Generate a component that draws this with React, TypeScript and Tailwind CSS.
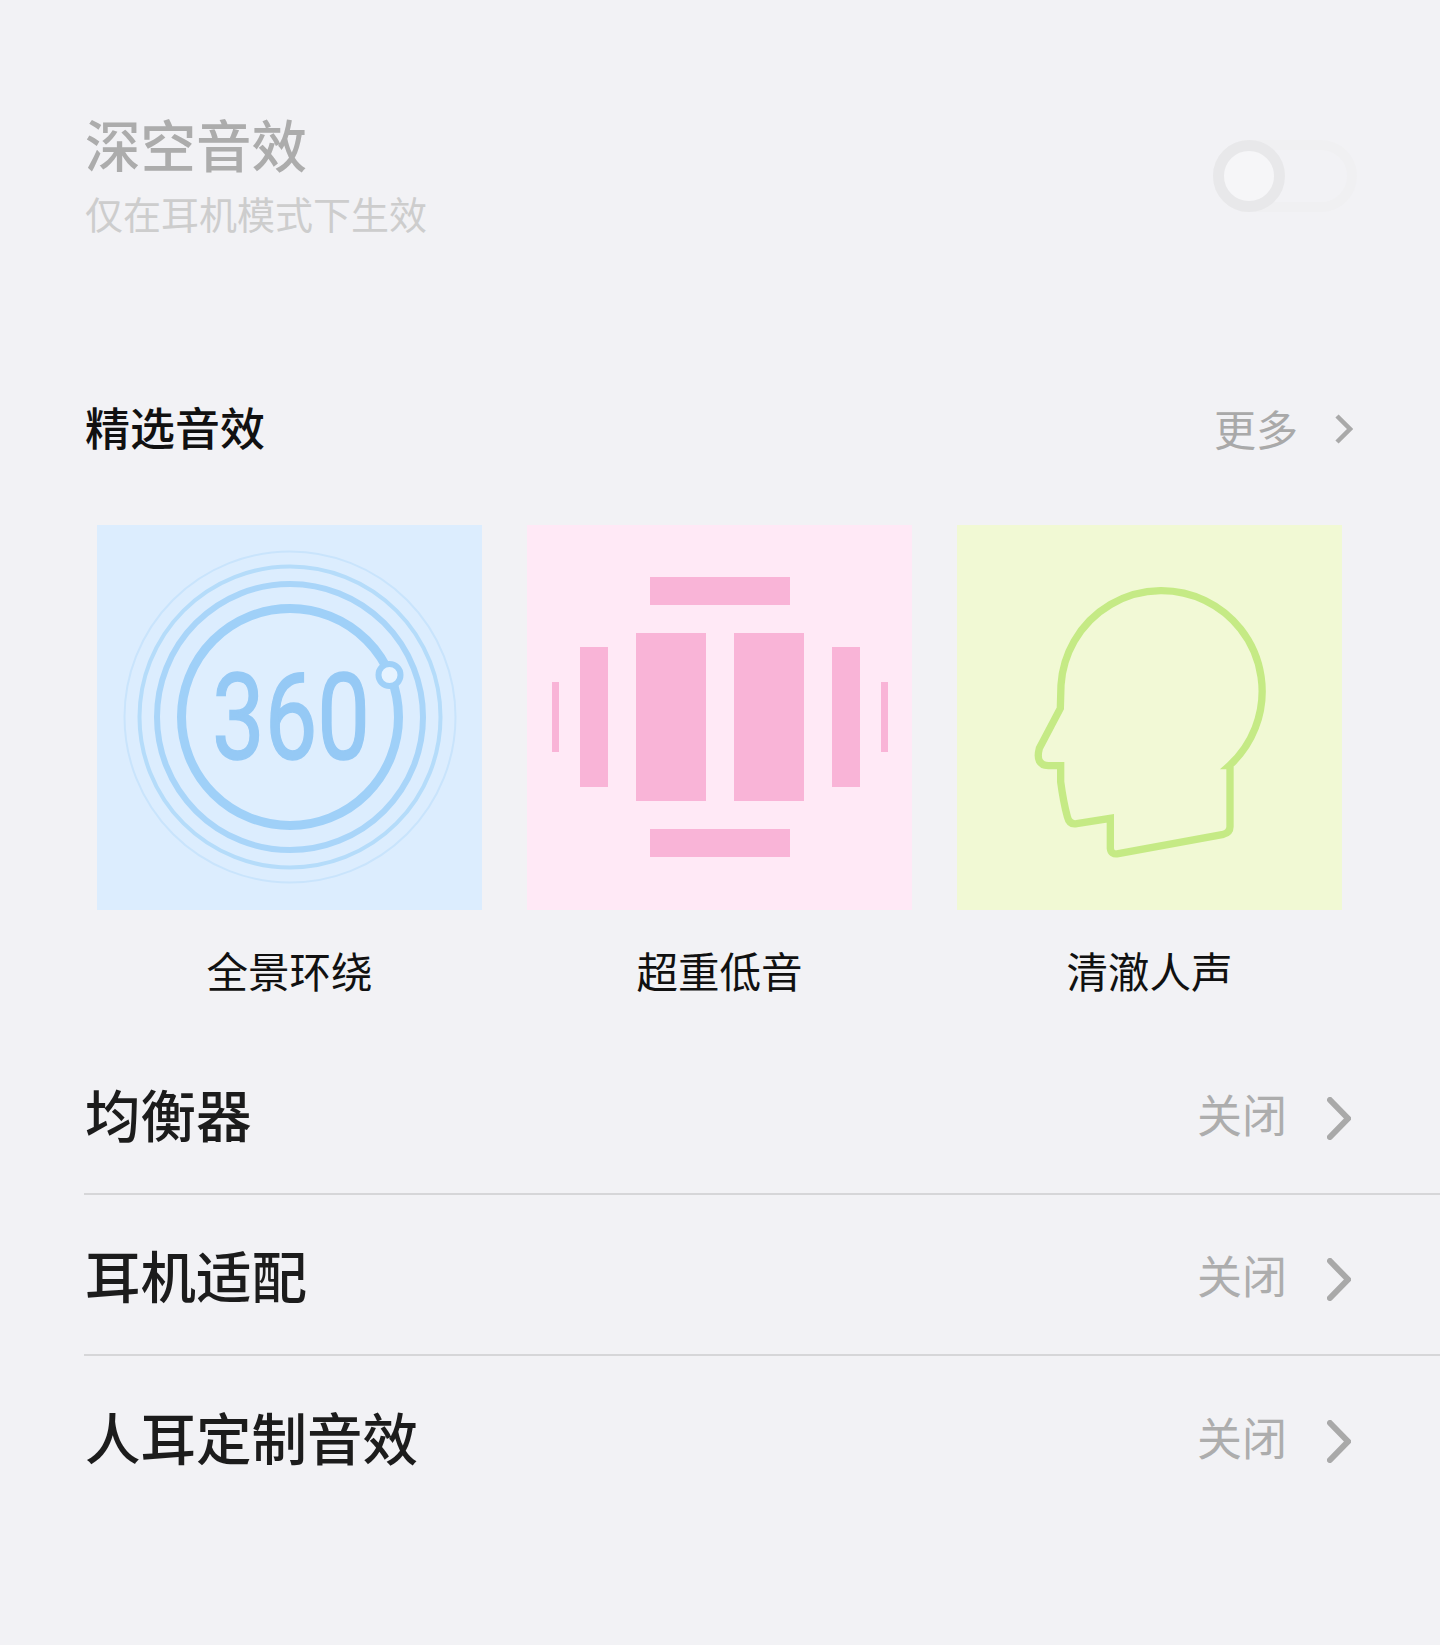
const rows = ['均衡器', '耳机适配', '人耳定制音效'];

function Surround() {
    return (
        <svg viewBox="0 0 385 385" className="w-full h-full">
            <circle cx="193" cy="192" r="165.5" fill="none" stroke="#c9e4fc" strokeWidth="2" />
            <circle cx="193" cy="192" r="150.5" fill="none" stroke="#b5dcfa" strokeWidth="4" />
            <circle cx="193" cy="192" r="133" fill="none" stroke="#a9d5f9" strokeWidth="6" />
            <circle cx="193" cy="192" r="108.5" fill="#deeefe" stroke="#9fd0f8" strokeWidth="9" />
            <circle cx="292.5" cy="150" r="11" fill="#e6f3ff" stroke="#9fd0f8" strokeWidth="6" />
            <text x="115" y="234" fontFamily="Roboto, sans-serif" fontSize="121" fill="#95c9f5" stroke="#95c9f5" strokeWidth="1.5" textLength="158" lengthAdjust="spacingAndGlyphs">360</text>
        </svg>
    );
}

function Bass() {
    return (
        <svg viewBox="0 0 385 385" className="w-full h-full" fill="#f9b4d7">
            <rect x="123" y="52" width="140" height="28" />
            <rect x="123" y="304" width="140" height="28" />
            <rect x="109" y="108" width="70" height="168" />
            <rect x="207" y="108" width="70" height="168" />
            <rect x="53" y="122" width="28" height="140" />
            <rect x="305" y="122" width="28" height="140" />
            <rect x="25" y="157" width="7" height="70" />
            <rect x="354" y="157" width="7" height="70" />
        </svg>
    );
}

function Head() {
    return (
        <svg viewBox="21 30 1155 1155" className="w-full h-full">
            <path
                d="M838 752 A302 302 0 1 0 333 510 L331 580 L268 700 Q255 750 295 752 L332 752 L332 800 Q340 860 352 905 Q358 930 380 926 L481 910 L481 1000 Q483 1020 505 1016 L820 958 Q840 952 840 935 L840 752 Z"
                fill="#f2f9d6"
                stroke="#c5ea85"
                strokeWidth="22"
                strokeLinejoin="miter"
            />
        </svg>
    );
}

export default function App() {
    return (
        <div
            className="w-full h-[1645px] overflow-hidden bg-[#f2f2f5] flex flex-col"
            style={{ fontFamily: '"Noto Sans CJK SC", sans-serif' }}
        >
            {/* Deep space toggle, disabled */}
            <div className="flex items-center justify-between pl-[85px] pr-[83px] pt-[107px]">
                <div>
                    <h1 className="text-[55.5px] leading-[72px] font-medium text-[#acacac]">深空音效</h1>
                    <p className="text-[38px] leading-[68px] text-[#cdcdcd]">仅在耳机模式下生效</p>
                </div>
                <div className="w-[144px] h-[72px] mb-[2px] rounded-full border-[10px] border-[#f0f0f2] flex items-center">
                    <div className="w-[72px] h-[72px] -ml-[10px] shrink-0 rounded-full bg-[#f6f6f8] border-[11px] border-[#e8e8ea]"></div>
                </div>
            </div>

            {/* Featured effects */}
            <div className="flex items-center justify-between h-[60px] mt-[150px] pl-[85px] pr-[87px]">
                <h2 className="text-[45px] font-medium text-[#111111]">精选音效</h2>
                <div className="flex items-center gap-[37px]">
                    <span className="text-[42px] text-[#a9a9a9]">更多</span>
                    <svg width="18" height="30" viewBox="0 0 18 30" fill="none" stroke="#a9a9a9" strokeWidth="4.5" className="mt-[4px]">
                        <path d="M2 2 L15 15 L2 28" />
                    </svg>
                </div>
            </div>

            <div className="grid grid-cols-[385px_385px_385px] gap-[45px] mt-[68px] pl-[97px]">
                <div>
                    <div className="h-[385px] bg-[#dcedfe]"><Surround /></div>
                    <p className="mt-[30px] text-center text-[41.5px] leading-[60px] text-[#111111]">全景环绕</p>
                </div>
                <div>
                    <div className="h-[385px] bg-[#ffe9f6]"><Bass /></div>
                    <p className="mt-[30px] text-center text-[41.5px] leading-[60px] text-[#111111]">超重低音</p>
                </div>
                <div>
                    <div className="h-[385px] bg-[#f1f9d4]"><Head /></div>
                    <p className="mt-[30px] text-center text-[41.5px] leading-[60px] text-[#111111]">清澈人声</p>
                </div>
            </div>

            {/* Settings rows */}
            <div className="mt-[34px] pl-[84px]">
                {rows.map((label, i) => (
                    <div
                        key={label}
                        className={`flex items-center justify-between h-[161px] pr-[89px] ${i < 2 ? 'border-b-2 border-[#d6d6d8]' : ''}`}
                    >
                        <span className="pl-[1px] text-[55.5px] font-medium text-[#1c1c1c]">{label}</span>
                        <div className="flex items-center gap-[40px]">
                            <span className="text-[45px] text-[#adadad]">关闭</span>
                            <svg width="24" height="43" viewBox="0 0 24 43" fill="none" stroke="#a9a9a9" strokeWidth="6" strokeLinecap="round" className="mt-[10px]">
                                <path d="M3 3 L21 21.5 L3 40" />
                            </svg>
                        </div>
                    </div>
                ))}
            </div>
        </div>
    );
}
